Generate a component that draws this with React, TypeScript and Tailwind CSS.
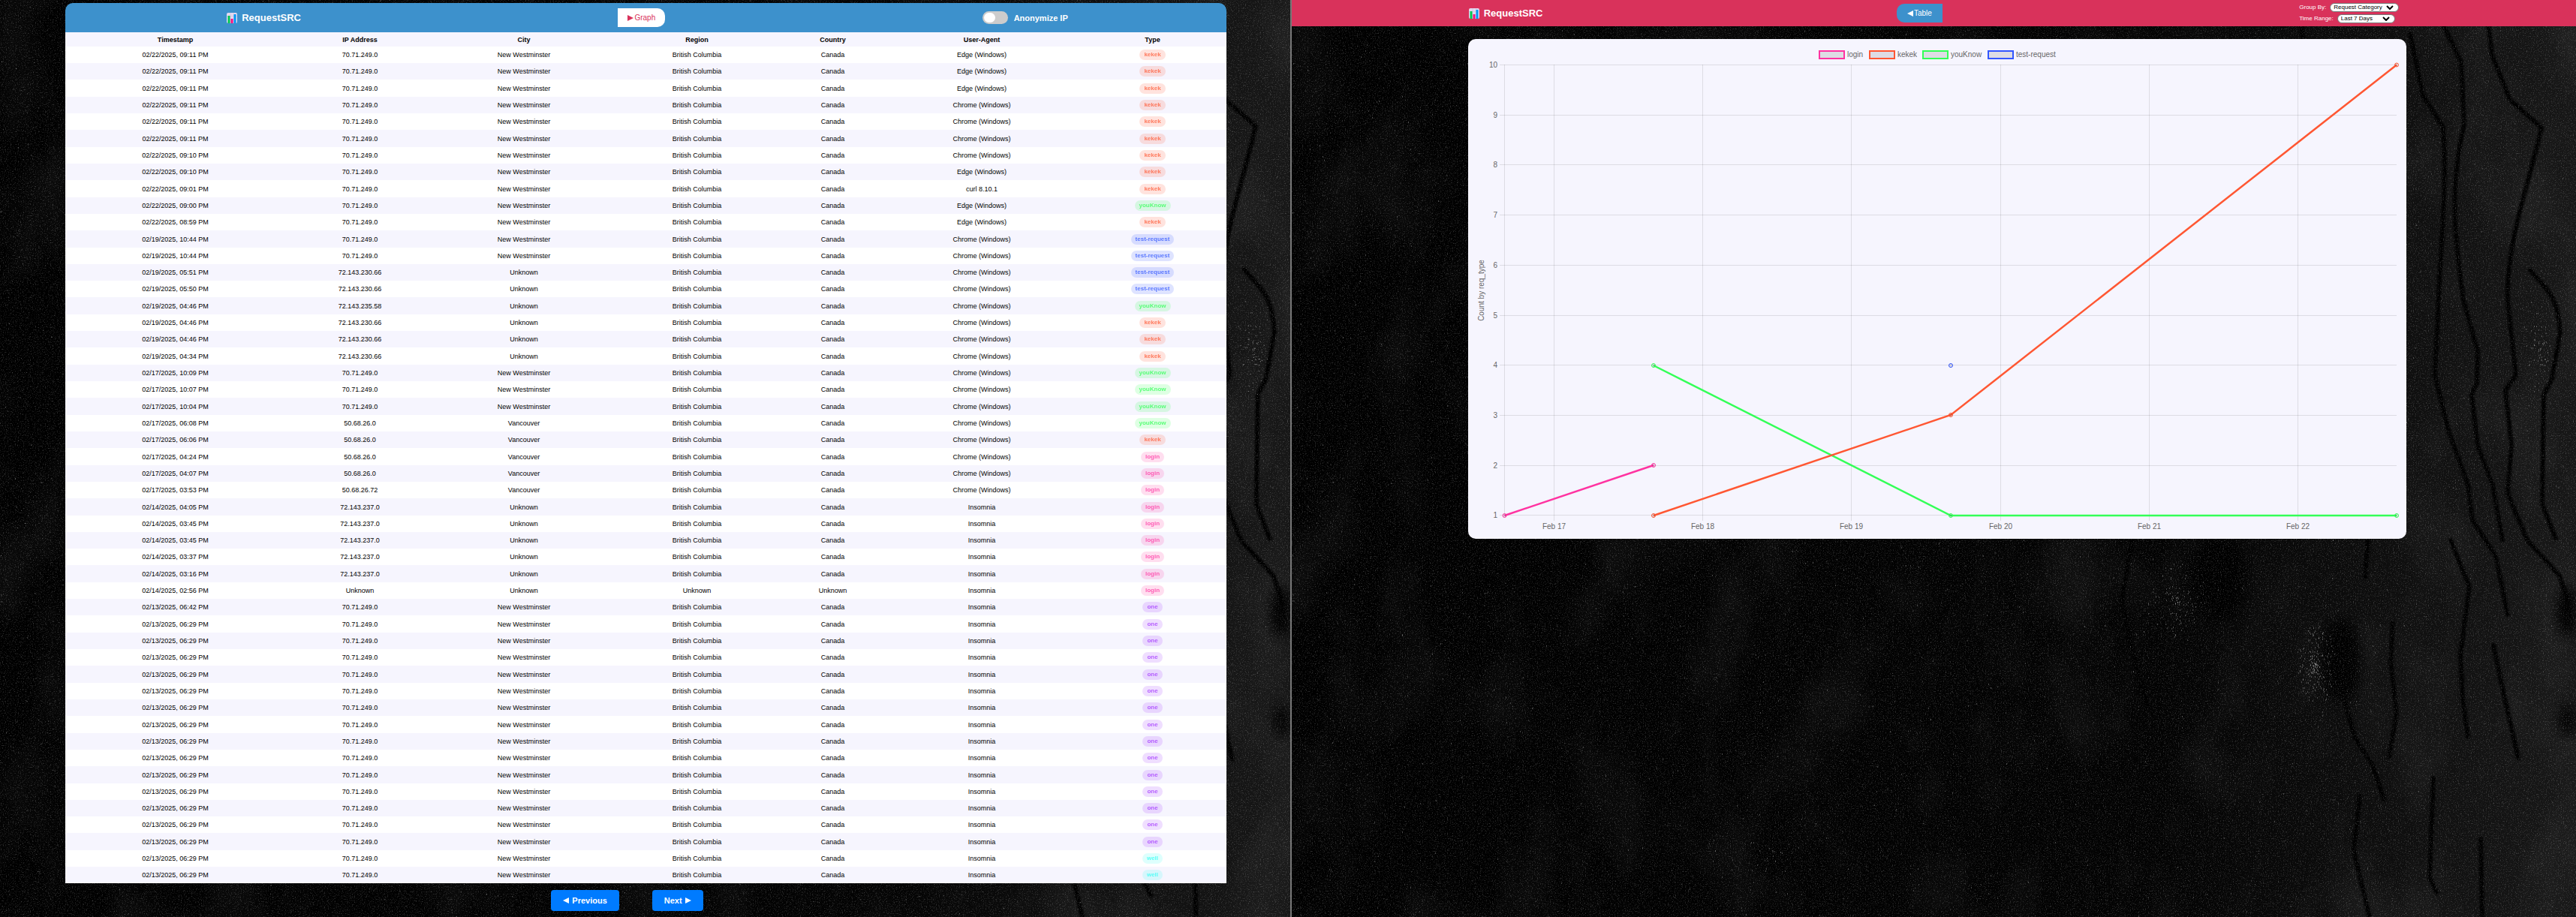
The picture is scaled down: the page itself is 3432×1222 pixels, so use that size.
import React from "react";

type Kind = "kekek" | "youKnow" | "test-request" | "login" | "one" | "well";

interface Entry {
  time: string;
  ip: string;
  city: string;
  region: string;
  country: string;
  agent: string;
  kind: Kind;
}

const BC = "British Columbia";
const NW = "New Westminster";
const HOME = "70.71.249.0";

const row = (time: string, ip: string, city: string, agent: string, kind: Kind, region = BC, country = "Canada"): Entry => ({
  time,
  ip,
  city,
  region,
  country,
  agent,
  kind,
});

const EDGE = "Edge (Windows)";
const CHROME = "Chrome (Windows)";
const INSOMNIA = "Insomnia";

const entries: Entry[] = [
  row("02/22/2025, 09:11 PM", HOME, NW, EDGE, "kekek"),
  row("02/22/2025, 09:11 PM", HOME, NW, EDGE, "kekek"),
  row("02/22/2025, 09:11 PM", HOME, NW, EDGE, "kekek"),
  row("02/22/2025, 09:11 PM", HOME, NW, CHROME, "kekek"),
  row("02/22/2025, 09:11 PM", HOME, NW, CHROME, "kekek"),
  row("02/22/2025, 09:11 PM", HOME, NW, CHROME, "kekek"),
  row("02/22/2025, 09:10 PM", HOME, NW, CHROME, "kekek"),
  row("02/22/2025, 09:10 PM", HOME, NW, EDGE, "kekek"),
  row("02/22/2025, 09:01 PM", HOME, NW, "curl 8.10.1", "kekek"),
  row("02/22/2025, 09:00 PM", HOME, NW, EDGE, "youKnow"),
  row("02/22/2025, 08:59 PM", HOME, NW, EDGE, "kekek"),
  row("02/19/2025, 10:44 PM", HOME, NW, CHROME, "test-request"),
  row("02/19/2025, 10:44 PM", HOME, NW, CHROME, "test-request"),
  row("02/19/2025, 05:51 PM", "72.143.230.66", "Unknown", CHROME, "test-request"),
  row("02/19/2025, 05:50 PM", "72.143.230.66", "Unknown", CHROME, "test-request"),
  row("02/19/2025, 04:46 PM", "72.143.235.58", "Unknown", CHROME, "youKnow"),
  row("02/19/2025, 04:46 PM", "72.143.230.66", "Unknown", CHROME, "kekek"),
  row("02/19/2025, 04:46 PM", "72.143.230.66", "Unknown", CHROME, "kekek"),
  row("02/19/2025, 04:34 PM", "72.143.230.66", "Unknown", CHROME, "kekek"),
  row("02/17/2025, 10:09 PM", HOME, NW, CHROME, "youKnow"),
  row("02/17/2025, 10:07 PM", HOME, NW, CHROME, "youKnow"),
  row("02/17/2025, 10:04 PM", HOME, NW, CHROME, "youKnow"),
  row("02/17/2025, 06:08 PM", "50.68.26.0", "Vancouver", CHROME, "youKnow"),
  row("02/17/2025, 06:06 PM", "50.68.26.0", "Vancouver", CHROME, "kekek"),
  row("02/17/2025, 04:24 PM", "50.68.26.0", "Vancouver", CHROME, "login"),
  row("02/17/2025, 04:07 PM", "50.68.26.0", "Vancouver", CHROME, "login"),
  row("02/17/2025, 03:53 PM", "50.68.26.72", "Vancouver", CHROME, "login"),
  row("02/14/2025, 04:05 PM", "72.143.237.0", "Unknown", INSOMNIA, "login"),
  row("02/14/2025, 03:45 PM", "72.143.237.0", "Unknown", INSOMNIA, "login"),
  row("02/14/2025, 03:45 PM", "72.143.237.0", "Unknown", INSOMNIA, "login"),
  row("02/14/2025, 03:37 PM", "72.143.237.0", "Unknown", INSOMNIA, "login"),
  row("02/14/2025, 03:16 PM", "72.143.237.0", "Unknown", INSOMNIA, "login"),
  row("02/14/2025, 02:56 PM", "Unknown", "Unknown", INSOMNIA, "login", "Unknown", "Unknown"),
  row("02/13/2025, 06:42 PM", HOME, NW, INSOMNIA, "one"),
  ...Array.from({ length: 14 }, () => row("02/13/2025, 06:29 PM", HOME, NW, INSOMNIA, "one")),
  row("02/13/2025, 06:29 PM", HOME, NW, INSOMNIA, "well"),
  row("02/13/2025, 06:29 PM", HOME, NW, INSOMNIA, "well"),
];

const kindClass: Record<Kind, string> = {
  kekek: "text-[#ff5733] bg-[#ff5733]/20",
  youKnow: "text-[#33ff57] bg-[#33ff57]/20",
  "test-request": "text-[#3357ff] bg-[#3357ff]/20",
  login: "text-[#ff33a1] bg-[#ff33a1]/20",
  one: "text-[#a133ff] bg-[#a133ff]/20",
  well: "text-[#33fff5] bg-[#33fff5]/20",
};

const rowHeight = (index: number) => {
  const step = (index + 1) % 16;
  return step % 3 === 0 && step !== 15 ? "h-[23px]" : "h-[22px]";
};

// Deterministic random numbers keep the speckle identical on every render.
function random(seed: number) {
  let s = seed;
  return () => {
    s = (s * 1664525 + 1013904223) % 4294967296;
    return s / 4294967296;
  };
}

function specks(seed: number, count: number, x: number, y: number, w: number, h: number) {
  const next = random(seed);
  let d = "";
  for (let i = 0; i < count; i++) {
    d += `M${Math.round(x + next() * w)} ${Math.round(y + next() * h)}h1`;
  }
  return d;
}

function cluster(seed: number, count: number, cx: number, cy: number, rx: number, ry: number) {
  const next = random(seed);
  let d = "";
  for (let i = 0; i < count; i++) {
    const a = next() * Math.PI * 2;
    const r = next();
    d += `M${Math.round(cx + Math.cos(a) * r * rx)} ${Math.round(cy + Math.sin(a) * r * ry)}h1`;
  }
  return d;
}

const faintSpecks = specks(7, 9000, 0, 0, 1450, 1222);
const brightSpecks = specks(21, 500, 0, 0, 1500, 1222);
const rockSpecks = specks(33, 600, 1400, 0, 311, 1222);
const clusters =
  cluster(3, 180, 1364, 885, 26, 56) +
  cluster(4, 90, 1180, 800, 42, 50) +
  cluster(5, 60, 1660, 460, 24, 70) +
  cluster(6, 30, 640, 1140, 90, 60);

const cracks = [
  "M1345 35C1352 110 1380 160 1400 240S1440 330 1470 400",
  "M1490 45L1507 127L1534 170C1540 250 1530 330 1528 400L1523 500L1541 573L1567 646L1573 693L1604 741L1620 819",
  "M1528 20L1558 83L1562 165C1540 260 1552 330 1561 400L1580 468L1579 510L1572 526L1580 594L1600 646L1613 720",
  "M1593 20L1599 73L1623 133L1665 170C1650 240 1618 320 1620 400L1631 500L1617 520L1625 594L1620 657L1646 720L1689 767L1700 800",
  "M1650 360C1670 385 1686 390 1690 442L1679 505L1668 526L1666 672L1684 718",
  "M1544 720L1569 782L1557 872L1560 930L1567 982",
  "M1467 830L1464 882L1472 950L1462 1008",
  "M1403 934L1416 982L1440 1020L1455 1065",
  "M1521 1037L1516 1170L1526 1190",
  "M1423 1060L1415 1134L1436 1222",
  "M1584 1118L1586 1222",
  "M1120 716L1106 800L1118 860L1140 940",
  "M1434 716L1430 770",
  "M1601 860L1616 930L1634 1010",
];

function RockBackdrop({ id }: { id: string }) {
  return (
    <svg
      aria-hidden="true"
      className="absolute inset-0 size-full"
      viewBox="0 0 1711 1222"
      preserveAspectRatio="xMidYMid slice"
    >
      <defs>
        <linearGradient id={`${id}-slope`} x1="0" x2="1">
          <stop offset="0" stopColor="#000" />
          <stop offset="0.68" stopColor="#030303" />
          <stop offset="0.84" stopColor="#0d0d0d" />
          <stop offset="0.95" stopColor="#141414" />
          <stop offset="1" stopColor="#171717" />
        </linearGradient>
        <filter id={`${id}-haze`} x="0" y="0" width="100%" height="100%">
          <feTurbulence type="fractalNoise" baseFrequency="0.011 0.006" numOctaves="4" seed="11" />
          <feColorMatrix values="0 0 0 0 1  0 0 0 0 1  0 0 0 0 1  0.9 0 0 0 -0.4" />
        </filter>
        <filter id={`${id}-grain`} x="0" y="0" width="100%" height="100%">
          <feTurbulence type="fractalNoise" baseFrequency="0.7" numOctaves="2" seed="4" />
          <feColorMatrix values="0 0 0 0 1  0 0 0 0 1  0 0 0 0 1  1.6 0 0 0 -0.85" />
        </filter>
        <filter id={`${id}-blur`} x="-100%" y="-100%" width="300%" height="300%">
          <feGaussianBlur stdDeviation="8" />
        </filter>
        <filter id={`${id}-soft`}>
          <feGaussianBlur stdDeviation="1" />
        </filter>
      </defs>
      <rect width="1711" height="1222" fill={`url(#${id}-slope)`} />
      <rect width="1711" height="1222" filter={`url(#${id}-haze)`} opacity="0.12" />
      <g fill="#000" filter={`url(#${id}-blur)`}>
        <ellipse cx="1398" cy="880" rx="26" ry="56" />
        <ellipse cx="1235" cy="770" rx="36" ry="60" />
        <ellipse cx="1699" cy="815" rx="14" ry="34" />
        <ellipse cx="1699" cy="960" rx="10" ry="22" />
      </g>
      <g fill="none" stroke="#000" strokeWidth="6" strokeLinejoin="round" strokeLinecap="round" filter={`url(#${id}-soft)`}>
        {cracks.map((d) => (
          <path key={d} d={d} />
        ))}
      </g>
      <rect width="1711" height="1222" filter={`url(#${id}-grain)`} opacity="0.4" />
      <path d={faintSpecks} stroke="#fff" strokeOpacity="0.22" />
      <path d={brightSpecks} stroke="#fff" strokeOpacity="0.5" />
      <path d={rockSpecks} stroke="#fff" strokeOpacity="0.14" strokeWidth="2" />
      <path d={clusters} stroke="#fff" strokeOpacity="0.5" />
    </svg>
  );
}

function Brand() {
  return (
    <h1 className="flex items-center gap-1.5 text-[13px] leading-4 font-bold text-white">
      <svg aria-hidden="true" className="size-3.5" viewBox="0 0 14 14">
        <rect width="14" height="14" rx="2" fill="#e3d9f0" />
        <path d="M5 0v14M9.5 0v14M0 4.5h14" stroke="#cdbfe2" strokeWidth="0.6" />
        <rect x="1.5" y="4" width="3" height="10" fill="#00c853" />
        <rect x="5.5" y="8" width="3" height="6" fill="#f5117f" />
        <rect x="9.5" y="2" width="3" height="12" fill="#0099f5" />
      </svg>
      RequestSRC
    </h1>
  );
}

function Arrow({ left = false }: { left?: boolean }) {
  return (
    <svg aria-hidden="true" className="size-2" viewBox="0 0 8 8" fill="currentColor">
      <path d={left ? "M8 0v8L0 4z" : "M0 0v8l8-4z"} />
    </svg>
  );
}

const columns = [
  { label: "Timestamp", width: "w-[293px]" },
  { label: "IP Address", width: "w-[199px]" },
  { label: "City", width: "w-[238px]" },
  { label: "Region", width: "w-[223px]" },
  { label: "Country", width: "w-[139px]" },
  { label: "User-Agent", width: "w-[258px]" },
  { label: "Type", width: "w-[197px]" },
];

function TablePane() {
  return (
    <section className="relative overflow-hidden bg-black pt-1 pb-1.5">
      <RockBackdrop id="left" />
      <div className="relative grid grid-cols-[87fr_1547fr_85fr]">
        <div className="col-start-2">
          <header className="flex h-[39px] items-center justify-around rounded-t-[10px] bg-[#3d91cc] pl-1">
            <Brand />
            <button type="button" className="flex h-[25px] items-center gap-px rounded-r-[10px] bg-white px-[13px] text-[10px] text-[#d9325b]">
              <Arrow />
              Graph
            </button>
            <label className="flex items-center gap-2 text-[11px] leading-4 font-bold text-white">
              <span className="relative h-[17px] w-[34px]">
                <input
                  type="checkbox"
                  className="peer block size-full appearance-none rounded-full bg-[#ccc] checked:bg-[#2196f3]"
                />
                <span className="pointer-events-none absolute top-0.5 left-0.5 h-[13px] w-[15px] rounded-full bg-white peer-checked:left-[17px]" />
              </span>
              Anonymize IP
            </label>
          </header>
          <table className="w-full table-fixed border-collapse bg-white text-center text-[9px] leading-3 text-black">
            <thead>
              <tr className="h-[19px] bg-[#f6f5fe]">
                {columns.map((c) => (
                  <th key={c.label} scope="col" className={`${c.width} p-0 font-bold`}>
                    {c.label}
                  </th>
                ))}
              </tr>
            </thead>
            <tbody>
              {entries.map((e, i) => (
                <tr key={i} className={`${rowHeight(i)} even:bg-[#f6f5fe]`}>
                  <td className="p-0">{e.time}</td>
                  <td className="p-0">{e.ip}</td>
                  <td className="p-0">{e.city}</td>
                  <td className="p-0">{e.region}</td>
                  <td className="p-0">{e.country}</td>
                  <td className="p-0">{e.agent}</td>
                  <td className="p-0">
                    <span className={`mx-auto block w-fit rounded-full px-1.5 text-[8px] leading-[14px] font-bold opacity-80 ${kindClass[e.kind]}`}>
                      {e.kind}
                    </span>
                  </td>
                </tr>
              ))}
            </tbody>
          </table>
          <nav aria-label="Pagination" className="mt-[9px] flex justify-center gap-11 pr-[50px] text-[11px] font-bold text-white">
            <button type="button" className="flex h-7 items-center gap-1 rounded bg-[#007bff] px-4">
              <Arrow left />
              Previous
            </button>
            <button type="button" className="flex h-7 items-center gap-1 rounded bg-[#007bff] px-4">
              Next
              <Arrow />
            </button>
          </nav>
        </div>
      </div>
    </section>
  );
}

function Picker({ id, label, options, width }: { id: string; label: string; options: string[]; width: string }) {
  return (
    <div className="flex items-center gap-[5px]">
      <label htmlFor={id}>{label}</label>
      <span className={`relative h-3 ${width}`}>
        <select
          id={id}
          className="block size-full appearance-none rounded-full border border-[#767676] bg-white pl-1 text-[8px] leading-[10px] text-black"
        >
          {options.map((o) => (
            <option key={o}>{o}</option>
          ))}
        </select>
        <svg aria-hidden="true" className="pointer-events-none absolute top-[3px] right-[7px] h-1.5 w-2.5" viewBox="0 0 10 6" fill="none" stroke="#000" strokeWidth="2">
          <path d="M1 1l4 4 4-4" />
        </svg>
      </span>
    </div>
  );
}

const series = [
  { name: "login", color: "#ff33a1", boxX: 468, points: [[48.5, 635], [247, 568]] },
  { name: "kekek", color: "#ff5733", boxX: 535, points: [[247, 635], [643, 501], [1237, 34.5]] },
  { name: "youKnow", color: "#33ff57", boxX: 606, points: [[247, 435], [643, 635], [1237, 635]] },
  { name: "test-request", color: "#3357ff", boxX: 693, points: [[643, 435]] },
];

const counts = [10, 9, 8, 7, 6, 5, 4, 3, 2, 1];
const days = ["Feb 17", "Feb 18", "Feb 19", "Feb 20", "Feb 21", "Feb 22"];
const countY = (n: number) => Math.round(34 + (10 - n) * 66.7) + 0.5;
const dayX = (i: number) => Math.round(114 + i * 198.2) + 0.5;

function Chart() {
  return (
    <svg role="img" aria-label="Requests per day by category" viewBox="0 0 1250 666" className="block w-full rounded-[10px] bg-[#f6f5fe]">
      <g stroke="#000" strokeOpacity="0.1">
        {counts.map((n) => (
          <line key={n} x1="42" x2="1237" y1={countY(n)} y2={countY(n)} />
        ))}
        <line x1="48.5" x2="48.5" y1="34" y2="635" />
        {days.map((d, i) => (
          <line key={d} x1={dayX(i)} x2={dayX(i)} y1="34" y2="642" />
        ))}
      </g>
      <g fill="#666" className="text-[10px]">
        {counts.map((n) => (
          <text key={n} x="39" y={countY(n) + 3} textAnchor="end">
            {n}
          </text>
        ))}
        {days.map((d, i) => (
          <text key={d} x={dayX(i)} y="653" textAnchor="middle">
            {d}
          </text>
        ))}
        <text transform="translate(21 335) rotate(-90)" textAnchor="middle">
          Count by req_type
        </text>
        {series.map((s) => (
          <text key={s.name} x={s.boxX + 37} y="24">
            {s.name}
          </text>
        ))}
      </g>
      {series.map((s) => (
        <rect key={s.name} x={s.boxX} y="16" width="33" height="10" fill="#dddce4" stroke={s.color} strokeWidth="2" />
      ))}
      {[...series].reverse().map((s) => (
        <g key={s.name} stroke={s.color}>
          <polyline points={s.points.map((p) => p.join(",")).join(" ")} fill="none" strokeWidth="2.5" />
          {s.points.map(([x, y]) => (
            <circle key={x} cx={x} cy={y} r="2.5" fill="#000" fillOpacity="0.1" strokeWidth="1" />
          ))}
        </g>
      ))}
    </svg>
  );
}

function GraphPane() {
  return (
    <section className="relative overflow-hidden bg-black">
      <RockBackdrop id="right" />
      <div className="relative">
        <header className="flex h-[35px] items-center justify-around bg-[#d9325b]">
          <Brand />
          <button type="button" className="flex h-[25px] items-center gap-px rounded-l-[10px] bg-[#3d91cc] px-[14px] text-[10px] text-white">
            <Arrow left />
            Table
          </button>
          <div className="flex flex-col gap-[3px] pl-1 text-[8px] leading-3 text-white">
            <Picker id="group-by" label="Group By:" width="w-[92px]" options={["Request Category", "City", "Country"]} />
            <Picker id="time-range" label="Time Range:" width="w-[77px]" options={["Last 7 Days", "Last 30 Days"]} />
          </div>
        </header>
        <div className="mt-[17px] grid grid-cols-[235fr_1250fr_226fr]">
          <div className="col-start-2">
            <Chart />
          </div>
        </div>
      </div>
    </section>
  );
}

export default function App() {
  return (
    <main className="grid min-h-screen grid-cols-[1719fr_2px_1711fr] bg-black font-['Liberation_Sans',Arial,sans-serif]">
      <TablePane />
      <div className="bg-[#777]" />
      <GraphPane />
    </main>
  );
}
